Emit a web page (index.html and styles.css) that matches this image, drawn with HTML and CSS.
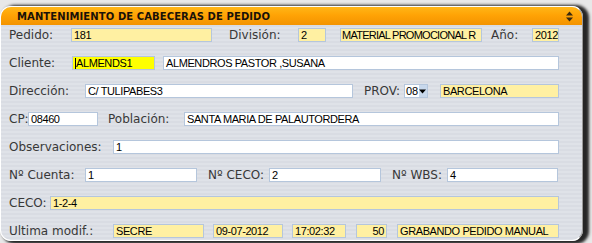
FILE: index.html
```html
<!DOCTYPE html>
<html lang="es">
<head>
<meta charset="utf-8">
<title>Mantenimiento de cabeceras de pedido</title>
<link rel="stylesheet" href="styles.css">
</head>
<body>
<div class="panel">
  <div class="header">
    <span class="title">MANTENIMIENTO DE CABECERAS DE PEDIDO</span>
    <svg class="toggle" width="9" height="11" viewBox="0 0 9 11"><path d="M4.5 0.5 L8 4.5 H1 Z" fill="#3a2a10"/><path d="M1 6.5 H8 L4.5 10.5 Z" fill="#3a2a10"/></svg>
  </div>
  <div class="body">
    <div class="row">
      <span class="lbl w62">Pedido:</span>
      <span class="fld y w141">181</span>
      <span class="lbl ml17 w69">División:</span>
      <span class="fld y w28">2</span>
      <span class="fld y w142 ml14 tight">MATERIAL PROMOCIONAL R</span>
      <span class="lbl ml9 w41">Año:</span>
      <span class="fld y w27">2012</span>
    </div>
    <div class="row">
      <span class="lbl w63">Cliente:</span>
      <span class="fld bright w83"><i class="caret"></i>ALMENDS1</span>
      <span class="fld w396 ml8">ALMENDROS PASTOR ,SUSANA</span>
    </div>
    <div class="row">
      <span class="lbl w76">Dirección:</span>
      <span class="fld w268">C/ TULIPABES3</span>
      <span class="lbl ml11 w40">PROV:</span>
      <span class="sel">08<svg width="7" height="5" viewBox="0 0 7 5"><path d="M0 0.5 H7 L3.5 4.5 Z" fill="#000"/></svg></span>
      <span class="fld y w119 ml12">BARCELONA</span>
    </div>
    <div class="row">
      <span class="lbl w19">CP:</span>
      <span class="fld w70">08460</span>
      <span class="lbl ml10 w76">Población:</span>
      <span class="fld w375">SANTA MARIA DE PALAUTORDERA</span>
    </div>
    <div class="row">
      <span class="lbl w104">Observaciones:</span>
      <span class="fld w446">1</span>
    </div>
    <div class="row">
      <span class="lbl w76">Nº Cuenta:</span>
      <span class="fld w112">1</span>
      <span class="lbl ml11 w61">Nº CECO:</span>
      <span class="fld w112">2</span>
      <span class="lbl ml11 w55">Nº WBS:</span>
      <span class="fld w111">4</span>
    </div>
    <div class="row">
      <span class="lbl w41">CECO:</span>
      <span class="fld y w509">1-2-4</span>
    </div>
    <div class="row">
      <span class="lbl w104">Ultima modif.:</span>
      <span class="fld y w91">SECRE</span>
      <span class="fld y w70 ml9">09-07-2012</span>
      <span class="fld y w54 ml9">17:02:32</span>
      <span class="fld y w31 ml10 right">50</span>
      <span class="fld y w162 ml10">GRABANDO PEDIDO MANUAL</span>
    </div>
  </div>
</div>
</body>
</html>
```
FILE: styles.css
```css
html, body {
  margin: 0;
  padding: 0;
}
body {
  background: #e8e8e8;
  width: 592px;
  height: 243px;
  overflow: hidden;
}
.panel {
  margin-top: 6px;
  width: 583px;
  height: 235px;
  box-sizing: border-box;
  border: 1px solid #ffffff;
  border-right-color: #9a9a9a;
  border-radius: 11px;
  background: repeating-linear-gradient(#dfe2e8 0 2px, #d9dce3 2px 4px);
  box-shadow: 4px 1px 3px 2px #262626;
  overflow: hidden;
}
.header {
  height: 18px;
  display: flex;
  align-items: center;
  justify-content: space-between;
  padding: 0 8px 0 16px;
  background: linear-gradient(#ffb617, #ffa305 45%, #f39300);
}
.title {
  font-family: "DejaVu Sans", Verdana, sans-serif;
  font-weight: bold;
  font-size: 10px;
  color: #1a1208;
  letter-spacing: 0.1px;
}
.toggle {
  display: block;
}
.body {
  padding: 3px 0 0 8px;
  display: flex;
  flex-direction: column;
  gap: 14px;
}
.row {
  display: flex;
  align-items: center;
  height: 14px;
}
.lbl {
  font-family: "DejaVu Sans", Verdana, sans-serif;
  font-size: 12px;
  color: #383838;
  white-space: nowrap;
  flex: none;
  line-height: 14px;
}
.fld {
  box-sizing: border-box;
  height: 14px;
  border: 1px solid #b5c6dc;
  background: #ffffff;
  font-family: "Liberation Sans", Arial, sans-serif;
  font-size: 11px;
  letter-spacing: -0.4px;
  line-height: 12px;
  color: #000;
  padding-left: 2px;
  white-space: nowrap;
  overflow: hidden;
  flex: none;
  position: relative;
}
.fld.tight { letter-spacing: -0.75px; padding-left: 1px; }
.fld.y { background: #fff0a2; }
.fld.bright { background: #ffff00; }
.fld.right { text-align: right; padding-right: 2px; }
.caret {
  display: inline-block;
  width: 1px;
  height: 11px;
  background: #000;
  vertical-align: -2px;
  margin-right: 0;
}
.sel {
  box-sizing: border-box;
  width: 24px;
  height: 14px;
  border: 1px solid #b5c6dc;
  background: linear-gradient(90deg, #ffffff 0 14px, #c8d8ec 14px);
  font-family: "Liberation Sans", Arial, sans-serif;
  font-size: 11px;
  line-height: 12px;
  display: flex;
  align-items: center;
  gap: 0;
  padding-left: 1px;
  flex: none;
}
.sel svg { margin-left: 1px; }
.w19 { width: 19px; } .w27 { width: 27px; } .w28 { width: 28px; } .w31 { width: 31px; }
.w40 { width: 40px; } .w41 { width: 41px; } .w54 { width: 54px; } .w55 { width: 55px; }
.w61 { width: 61px; } .w62 { width: 62px; } .w63 { width: 63px; } .w69 { width: 69px; }
.w70 { width: 70px; } .w76 { width: 76px; } .w83 { width: 83px; } .w91 { width: 91px; }
.w104 { width: 104px; } .w111 { width: 111px; } .w112 { width: 112px; } .w119 { width: 119px; }
.w141 { width: 141px; } .w142 { width: 142px; } .w162 { width: 162px; } .w268 { width: 268px; }
.w375 { width: 375px; } .w396 { width: 396px; } .w446 { width: 446px; } .w509 { width: 509px; }
.ml8 { margin-left: 8px; } .ml9 { margin-left: 9px; } .ml10 { margin-left: 10px; }
.ml11 { margin-left: 11px; } .ml12 { margin-left: 12px; } .ml14 { margin-left: 14px; }
.ml17 { margin-left: 17px; }
```
